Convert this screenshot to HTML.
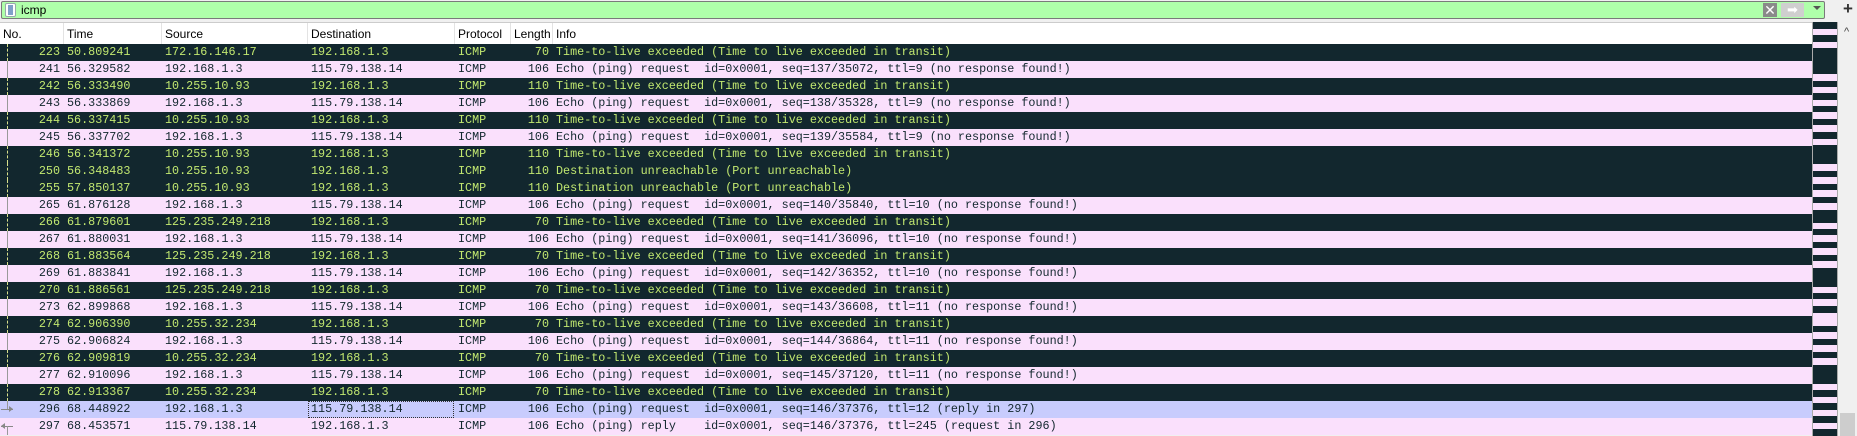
<!DOCTYPE html>
<html><head><meta charset="utf-8"><style>
*{margin:0;padding:0;box-sizing:border-box}
body{width:1857px;height:436px;background:#f0f0f0;position:relative;overflow:hidden;font-family:"Liberation Sans",sans-serif}
.fb{position:absolute;left:1px;top:1px;width:1824px;height:18px;border:1px solid #7a7a7a;border-radius:2px;background:#afffaa}
.bm{position:absolute;left:3px;top:1px;width:11px;height:14px;background:#fff;border:1px solid #9aa;border-radius:2px}
.bm:after{content:"";position:absolute;left:2px;top:1px;width:5px;height:10px;background:#7fa0c8}
.ft{position:absolute;left:19px;top:0;font-size:12px;line-height:16px;color:#000}
.hdr{position:absolute;left:0;top:22px;width:1812px;height:22px;background:#fff;border-top:1px solid #ccc}
.hdr span{position:absolute;top:4px;font-size:12px;color:#000}
.hdr i{position:absolute;top:0;width:1px;height:21px;background:#e3e3e3}
.row{position:absolute;left:0;width:1812px;height:17px;font-family:"Liberation Mono",monospace;font-size:11.75px;line-height:17px;white-space:pre}
.d{background:#12272e;color:#c2e870}
.p{background:#fae0fc;color:#12272e}
.s{background:#c8ccfd;color:#12272e}
.row span{position:absolute;top:0}
.r{text-align:right}
.mm{position:absolute;left:1812px;top:22px;width:26px;height:414px;background:#fae0fc;border-left:1px solid #aaa;border-right:1px solid #aaa}
.mm div{position:absolute;left:0;width:24px;background:#12272e}
.sb{position:absolute;left:1840px;top:22px;width:17px;height:414px;background:#f0f0f0}
</style></head><body>
<div class="fb"><div class="bm"></div><div class="ft">icmp</div></div>
<div style="position:absolute;left:1763px;top:3px;width:14px;height:14px;background:#8a8a8a;color:#fff;font-size:14px;line-height:14px;text-align:center">✕</div>
<div style="position:absolute;left:1781px;top:3px;width:23px;height:14px;background:#cfcfcf;color:#fff;font-size:13px;line-height:14px;text-align:center">➡</div>
<div style="position:absolute;left:1813px;top:6px;width:0;height:0;border-left:4px solid transparent;border-right:4px solid transparent;border-top:4px solid #555"></div>
<div style="position:absolute;left:1843px;top:0;font-size:17px;font-weight:bold;color:#333;line-height:18px">+</div>
<div class="hdr">
<span style="left:3px">No.</span><i style="left:63px"></i>
<span style="left:67px">Time</span><i style="left:161px"></i>
<span style="left:165px">Source</span><i style="left:307px"></i>
<span style="left:311px">Destination</span><i style="left:454px"></i>
<span style="left:458px">Protocol</span><i style="left:510px"></i>
<span style="left:514px">Length</span><i style="left:552px"></i>
<span style="left:556px">Info</span>
</div>
<div id="rows"></div>
<div class="mm">
<div style="top:0;height:7px"></div><div style="top:13px;height:7px"></div><div style="top:26px;height:26px"></div><div style="top:59px;height:6px"></div><div style="top:71px;height:7px"></div><div style="top:84px;height:6px"></div><div style="top:97px;height:6px"></div><div style="top:110px;height:7px"></div><div style="top:123px;height:19px"></div><div style="top:149px;height:6px"></div><div style="top:162px;height:6px"></div><div style="top:175px;height:6px"></div><div style="top:188px;height:13px"></div><div style="top:207px;height:6px"></div><div style="top:220px;height:6px"></div><div style="top:233px;height:6px"></div><div style="top:246px;height:19px"></div><div style="top:271px;height:6px"></div><div style="top:284px;height:7px"></div><div style="top:304px;height:6px"></div><div style="top:317px;height:6px"></div><div style="top:330px;height:6px"></div><div style="top:343px;height:19px"></div><div style="top:368px;height:7px"></div><div style="top:381px;height:7px"></div><div style="top:394px;height:7px"></div><div style="top:407px;height:7px"></div>
</div>
<div class="sb"><div style="position:absolute;left:4px;top:4px;font-size:11px;color:#444">^</div><div style="position:absolute;left:0;top:391px;width:15px;height:23px;background:#cdcdcd"></div></div>
<script>
var R=[
["d","223","50.809241","172.16.146.17","192.168.1.3","70","Time-to-live exceeded (Time to live exceeded in transit)"],
["p","241","56.329582","192.168.1.3","115.79.138.14","106","Echo (ping) request  id=0x0001, seq=137/35072, ttl=9 (no response found!)"],
["d","242","56.333490","10.255.10.93","192.168.1.3","110","Time-to-live exceeded (Time to live exceeded in transit)"],
["p","243","56.333869","192.168.1.3","115.79.138.14","106","Echo (ping) request  id=0x0001, seq=138/35328, ttl=9 (no response found!)"],
["d","244","56.337415","10.255.10.93","192.168.1.3","110","Time-to-live exceeded (Time to live exceeded in transit)"],
["p","245","56.337702","192.168.1.3","115.79.138.14","106","Echo (ping) request  id=0x0001, seq=139/35584, ttl=9 (no response found!)"],
["d","246","56.341372","10.255.10.93","192.168.1.3","110","Time-to-live exceeded (Time to live exceeded in transit)"],
["d","250","56.348483","10.255.10.93","192.168.1.3","110","Destination unreachable (Port unreachable)"],
["d","255","57.850137","10.255.10.93","192.168.1.3","110","Destination unreachable (Port unreachable)"],
["p","265","61.876128","192.168.1.3","115.79.138.14","106","Echo (ping) request  id=0x0001, seq=140/35840, ttl=10 (no response found!)"],
["d","266","61.879601","125.235.249.218","192.168.1.3","70","Time-to-live exceeded (Time to live exceeded in transit)"],
["p","267","61.880031","192.168.1.3","115.79.138.14","106","Echo (ping) request  id=0x0001, seq=141/36096, ttl=10 (no response found!)"],
["d","268","61.883564","125.235.249.218","192.168.1.3","70","Time-to-live exceeded (Time to live exceeded in transit)"],
["p","269","61.883841","192.168.1.3","115.79.138.14","106","Echo (ping) request  id=0x0001, seq=142/36352, ttl=10 (no response found!)"],
["d","270","61.886561","125.235.249.218","192.168.1.3","70","Time-to-live exceeded (Time to live exceeded in transit)"],
["p","273","62.899868","192.168.1.3","115.79.138.14","106","Echo (ping) request  id=0x0001, seq=143/36608, ttl=11 (no response found!)"],
["d","274","62.906390","10.255.32.234","192.168.1.3","70","Time-to-live exceeded (Time to live exceeded in transit)"],
["p","275","62.906824","192.168.1.3","115.79.138.14","106","Echo (ping) request  id=0x0001, seq=144/36864, ttl=11 (no response found!)"],
["d","276","62.909819","10.255.32.234","192.168.1.3","70","Time-to-live exceeded (Time to live exceeded in transit)"],
["p","277","62.910096","192.168.1.3","115.79.138.14","106","Echo (ping) request  id=0x0001, seq=145/37120, ttl=11 (no response found!)"],
["d","278","62.913367","10.255.32.234","192.168.1.3","70","Time-to-live exceeded (Time to live exceeded in transit)"],
["s","296","68.448922","192.168.1.3","115.79.138.14","106","Echo (ping) request  id=0x0001, seq=146/37376, ttl=12 (reply in 297)"],
["p","297","68.453571","115.79.138.14","192.168.1.3","106","Echo (ping) reply    id=0x0001, seq=146/37376, ttl=245 (request in 296)"]
];
var h="";
R.forEach(function(r,i){
 var t=44+i*17;
 var g="";
 if(i<21){g=r[0]=="d"?'<span style="left:7px;top:0;height:17px;border-left:1px dashed #d8e08a"></span>':'<span style="left:7px;top:0;height:17px;border-left:1px solid #999"></span>';}
 else if(i==21){g='<span style="left:1px;top:8px;width:12px;height:1px;background:#888"></span><span style="left:9px;top:5px;width:0;height:0;border-top:3px solid transparent;border-bottom:3px solid transparent;border-left:4px solid #888"></span><span style="left:7px;top:0;height:8px;border-left:1px solid #999"></span>';}
 else {g='<span style="left:1px;top:8px;width:12px;height:1px;background:#888"></span><span style="left:1px;top:5px;width:0;height:0;border-top:3px solid transparent;border-bottom:3px solid transparent;border-right:4px solid #888"></span><span style="left:7px;top:8px;height:9px;border-left:1px solid #999"></span>';}
 var f=r[0]=="s"?'<span style="left:308px;top:0;width:146px;height:17px;border:1px dotted #333"></span>':'';
 h+='<div class="row '+r[0]+'" style="top:'+t+'px">'+g+f+
 '<span class="r" style="left:20px;width:40px">'+r[1]+'</span>'+
 '<span style="left:67px">'+r[2]+'</span>'+
 '<span style="left:165px">'+r[3]+'</span>'+
 '<span style="left:311px">'+r[4]+'</span>'+
 '<span style="left:458px">ICMP</span>'+
 '<span class="r" style="left:510px;width:39px">'+r[5]+'</span>'+
 '<span style="left:556px">'+r[6]+'</span></div>';
});
document.getElementById("rows").innerHTML=h;
</script>
</body></html>
